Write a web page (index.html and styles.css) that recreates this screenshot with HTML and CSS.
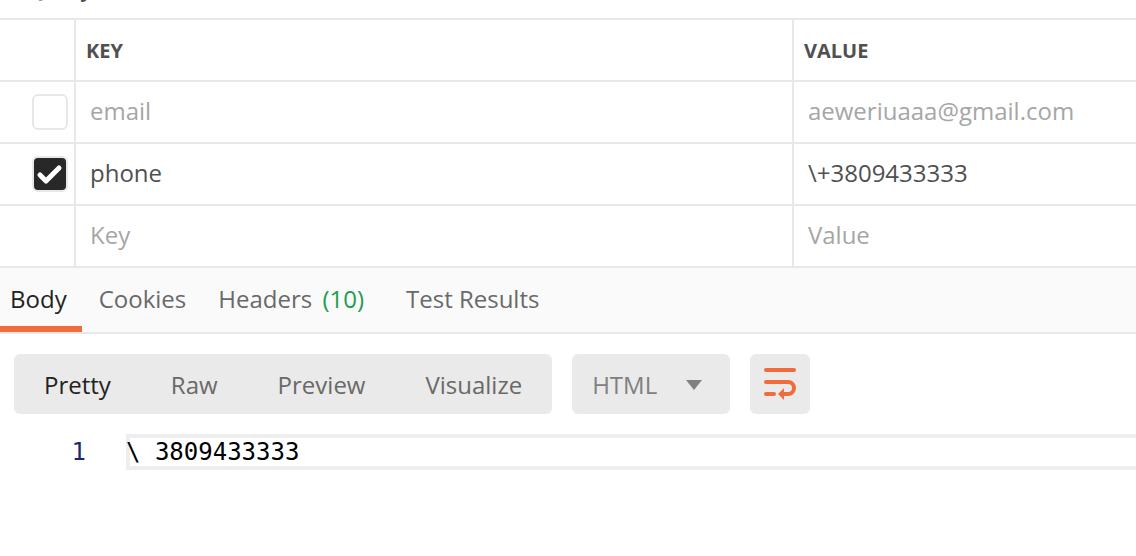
FILE: index.html
```
<!DOCTYPE html>
<html lang="en">
<head>
<meta charset="utf-8">
<title>Query Params</title>
<link rel="stylesheet" href="styles.css">
</head>
<body>
<main class="app">
  <section class="params">
    <h2 class="params-title">Query Params</h2>
    <table class="grid">
      <colgroup><col class="col-check"><col class="col-key"><col></colgroup>
      <thead>
        <tr><th></th><th scope="col">KEY</th><th scope="col">VALUE</th></tr>
      </thead>
      <tbody>
        <tr class="off">
          <td class="check-cell"><input class="check" type="checkbox" aria-label="Use email"></td>
          <td><input class="field" type="text" value="email" aria-label="Key"></td>
          <td><input class="field" type="text" value="aeweriuaaa@gmail.com" aria-label="Value"></td>
        </tr>
        <tr>
          <td class="check-cell">
            <label class="check-wrap">
              <input class="check" type="checkbox" checked aria-label="Use phone">
              <svg class="tick" viewBox="0 0 36 36" aria-hidden="true"><path d="M8 19l6 6L27 12"/></svg>
            </label>
          </td>
          <td><input class="field" type="text" value="phone" aria-label="Key"></td>
          <td><input class="field" type="text" value="\+3809433333" aria-label="Value"></td>
        </tr>
        <tr>
          <td></td>
          <td><input class="field" type="text" placeholder="Key" aria-label="New key"></td>
          <td><input class="field" type="text" placeholder="Value" aria-label="New value"></td>
        </tr>
      </tbody>
    </table>
  </section>

  <nav class="tabs">
    <button class="tab active" type="button">Body</button>
    <button class="tab" type="button">Cookies</button>
    <button class="tab counted" type="button">Headers <span class="count">(10)</span></button>
    <button class="tab" type="button">Test Results</button>
  </nav>

  <div class="toolbar">
    <div class="modes">
      <button class="mode active" type="button">Pretty</button>
      <button class="mode" type="button">Raw</button>
      <button class="mode" type="button">Preview</button>
      <button class="mode" type="button">Visualize</button>
    </div>
    <div class="language">
      <select class="language-select" aria-label="Language"><option>HTML</option></select>
      <svg class="caret" viewBox="0 0 16 10" aria-hidden="true"><path d="M0 0h16L8 10z"/></svg>
    </div>
    <button class="wrap" type="button" aria-label="Wrap lines">
      <svg class="wrap-icon" viewBox="0 0 32 32" aria-hidden="true">
        <path class="line" d="M2 2H30M2 14H24a6 6 0 0 1 0 12H19M2 26H10"/>
        <path class="head" d="M14 26l6-6v12z"/>
      </svg>
    </button>
  </div>

  <div class="editor">
    <span class="line-number">1</span>
    <code class="code-line">\ 3809433333</code>
  </div>
</main>
</body>
</html>
```
FILE: styles.css
```
* {
  box-sizing: border-box;
}

body {
  margin: 0;
  background: #fff;
  color: #505050;
  font: 24px/32px "Open Sans", sans-serif;
  overflow-x: hidden;
}

button,
input,
select {
  font: inherit;
  color: inherit;
  border: 0;
  margin: 0;
  padding: 0;
  background: none;
}

.app {
  min-height: 100vh;
  overflow: hidden;
}

.params-title {
  margin: -28px 0 0;
  padding: 0 27px 14px;
  font-size: 22px;
  font-weight: 600;
}

.grid {
  width: 100%;
  table-layout: fixed;
  border-spacing: 0;
  border-top: 2px solid #e8e8e8;
}

.col-check {
  width: 76px;
}

.col-key {
  width: 63.2%;
}

.grid th,
.grid td {
  height: 62px;
  padding: 0;
  border-bottom: 2px solid #e8e8e8;
  border-right: 2px solid #e8e8e8;
}

.grid th:last-child,
.grid td:last-child {
  border-right: 0;
}

.grid th {
  padding: 2px 10px 0;
  text-align: left;
  font-size: 20px;
  font-weight: 700;
}

.field {
  display: block;
  width: 100%;
  height: 60px;
  padding: 0 14px 4px;
}

.field::placeholder {
  color: #a6a6a6;
  opacity: 1;
}

.off {
  color: #a6a6a6;
}

.grid .check-cell {
  padding: 0 6px 0 32px;
}

.check-wrap {
  display: grid;
}

.check {
  appearance: none;
  display: block;
  width: 36px;
  height: 36px;
  border: 2px solid #e8e8e8;
  border-radius: 6px;
}

.check:checked {
  background: #282828;
}

.check-wrap > * {
  grid-area: 1 / 1;
}

.tick {
  width: 36px;
  height: 36px;
  fill: none;
  stroke: #fff;
  stroke-width: 5;
  stroke-linecap: round;
  stroke-linejoin: round;
  pointer-events: none;
}

.tabs {
  display: flex;
  gap: 16px;
  height: 66px;
  background: #fafafa;
  border-bottom: 2px solid #e8e8e8;
}

.tab {
  padding: 4px 8px 0;
  color: #696969;
  border-bottom: 6px solid transparent;
}

.tab.active {
  padding: 4px 15px 0 10px;
  margin-right: -7px;
  color: #222;
  border-color: #f26b3a;
}

.tab.counted {
  margin-right: 10px;
}

.count {
  margin-left: 4px;
  color: #1d9d4e;
}

.toolbar {
  display: flex;
  gap: 20px;
  padding: 20px 14px;
}

.modes,
.language,
.wrap {
  height: 60px;
  border-radius: 6px;
  background: #eaeaea;
}

.modes {
  display: flex;
}

.mode {
  padding: 2px 30px 0;
  color: #696969;
}

.mode.active {
  color: #222;
}

.language {
  display: grid;
  align-items: center;
  width: 158px;
  color: #808080;
}

.language > * {
  grid-area: 1 / 1;
}

.language-select {
  appearance: none;
  width: 100%;
  height: 60px;
  padding: 2px 20px 0;
}

.caret {
  justify-self: end;
  width: 16px;
  height: 10px;
  margin: 2px 28px 0 0;
  fill: #808080;
  pointer-events: none;
}

.wrap {
  display: grid;
  place-items: center;
  width: 60px;
}

.wrap-icon {
  width: 32px;
  height: 32px;
}

.line {
  fill: none;
  stroke: #f26b3a;
  stroke-width: 4;
  stroke-linecap: round;
}

.head {
  fill: #f26b3a;
}

.editor {
  display: flex;
  font: 24px/28px "DejaVu Sans Mono", monospace;
}

.line-number {
  width: 126px;
  padding: 4px 40px 4px 0;
  text-align: right;
  color: #1c2674;
}

.code-line {
  flex: 1;
  border: 4px solid #eee;
  border-right: 0;
  font: inherit;
  color: #000;
  white-space: pre;
  text-indent: -4px;
}
```
